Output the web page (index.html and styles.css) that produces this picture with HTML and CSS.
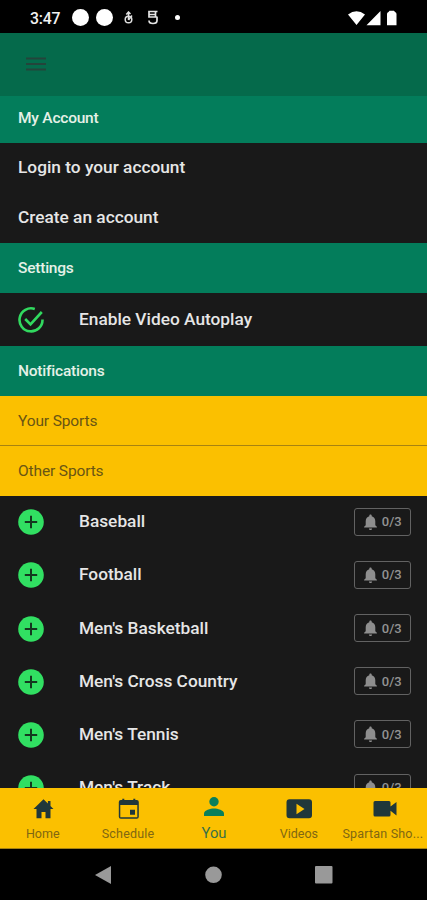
FILE: index.html
```
<!DOCTYPE html>
<html lang="en">
<head>
<meta charset="utf-8">
<title>Settings</title>
<link rel="stylesheet" href="styles.css">
</head>
<body>
<svg class="defs" width="0" height="0">
  <symbol id="plus" viewBox="0 0 26 26"><circle cx="13" cy="13" r="12.8" fill="#31df62"/><path d="M13 6.8v12.4M6.8 13h12.4" stroke="#14371f" stroke-width="2" fill="none"/></symbol>
  <symbol id="bell" viewBox="4 2 16 20"><path fill="#8e8e8e" d="M12 22c1.100 0 2-.9 2-2h-4c0 1.100.9 2 2 2zm6-6v-5c0-3.070-1.640-5.640-4.500-6.320V4c0-.83-.67-1.500-1.500-1.500s-1.500.67-1.500 1.500v.68C7.630 5.360 6 7.920 6 11v5l-2 2v1h16v-1l-2-2z"/></symbol>
</svg>
<div class="phone">
  <div class="status">
    <span class="time">3:47</span>
    <i class="dot"></i><i class="dot second"></i>
    <svg class="glyph-a" width="10" height="14" viewBox="0 0 10 14" fill="none" stroke="#ddd" stroke-width="1.500"><circle cx="4.500" cy="8.500" r="3.300"/><path d="M4.500 9V1M2.300 3.500L4.500 1l2 2M4.500 9l3.500-4.500"/></svg>
    <svg class="glyph-b" width="12" height="15" viewBox="0 0 12 15" fill="none" stroke="#e4e4e4" stroke-width="1.700"><path d="M10.500 1.500H2V7h8.500M2 4.500h7M8.500 1v6M10 7v3.500Q10 13.500 6 13.500T2 10.500"/></svg>
    <i class="tiny"></i>
    <svg class="signals" width="50" height="16" viewBox="0 0 50 16" fill="#fff"><path d="M0 4.500Q8.500-2 17 4.500L8.500 15zM18.500 15.200L32.500 1v14.200zM39 4q0-1.500 1.500-2l1-1.200h4.500l1 1.200q1.500.5 1.500 2v11.200H39z"/></svg>
  </div>
  <header class="appbar">
    <svg width="20" height="14" viewBox="0 0 20 14"><path d="M0 1.500h20M0 7h20M0 12.500h20" stroke="#24443b" stroke-width="2.200"/></svg>
  </header>
  <main class="content">
    <h2 class="section first"><span>My Account</span></h2>
    <div class="link"><span>Login to your account</span></div>
    <div class="link"><span>Create an account</span></div>
    <h2 class="section"><span>Settings</span></h2>
    <div class="row setting">
      <svg class="mark" viewBox="0 0 26 26" fill="none" stroke="#31d95f" stroke-width="2.600"><path d="M16.800 2A11.500 11.500 0 1 0 24.500 12.500M7.200 12l5.300 5.300L23.800 5"/></svg>
      <span class="name">Enable Video Autoplay</span>
    </div>
    <h2 class="section"><span>Notifications</span></h2>
    <h3 class="group lined">Your Sports</h3>
    <h3 class="group">Other Sports</h3>
    <div class="row"><svg class="mark"><use href="#plus"/></svg><span class="name">Baseball</span><span class="count"><svg><use href="#bell"/></svg>0/3</span></div>
    <div class="row"><svg class="mark"><use href="#plus"/></svg><span class="name">Football</span><span class="count"><svg><use href="#bell"/></svg>0/3</span></div>
    <div class="row"><svg class="mark"><use href="#plus"/></svg><span class="name">Men's Basketball</span><span class="count"><svg><use href="#bell"/></svg>0/3</span></div>
    <div class="row"><svg class="mark"><use href="#plus"/></svg><span class="name">Men's Cross Country</span><span class="count"><svg><use href="#bell"/></svg>0/3</span></div>
    <div class="row"><svg class="mark"><use href="#plus"/></svg><span class="name">Men's Tennis</span><span class="count"><svg><use href="#bell"/></svg>0/3</span></div>
    <div class="row"><svg class="mark"><use href="#plus"/></svg><span class="name">Men's Track</span><span class="count"><svg><use href="#bell"/></svg>0/3</span></div>
  </main>
  <nav class="tabs">
    <a class="tab"><svg width="26" height="24" viewBox="0 0 26 24"><path fill="#20373a" d="M13.500 2.300L3.500 12h3V21.300h5v-6.300h4v6.300h5V12h3l-3-2.900V4h-2.600v2.600z"/></svg><span>Home</span></a>
    <a class="tab"><svg width="26" height="24" viewBox="0 0 26 24"><path fill="#20373a" fill-rule="evenodd" d="M5.800 3h1.500V1.700h2V3h9V1.700h2V3h1.500q2 0 2 2v14.700q0 2-2 2h-16q-2 0-2-2V5q0-2 2-2zM5.300 8v12.200h17V8zM15 12.800h5v5h-5z"/></svg><span class="wide">Schedule</span></a>
    <a class="tab active"><svg width="26" height="24" viewBox="0 0 26 24"><g fill="#087f5b"><circle cx="14" cy="4.800" r="4.700"/><path d="M4 19v-2.500c0-3.300 6.500-5 10-5s10 1.700 10 5V19z"/></g></svg><span>You</span></a>
    <a class="tab"><svg width="26" height="24" viewBox="0 0 26 24"><path fill="#20373a" fill-rule="evenodd" d="M3.500 2.300h19.500q3 0 3 3v13q0 3-3 3H3.500q-3 0-3-3v-13q0-3 3-3zm7 4.400v10.500l8-5.200z"/></svg><span>Videos</span></a>
    <a class="tab"><svg width="26" height="24" viewBox="0 0 26 24"><path fill="#20373a" d="M4 4h14q1.500 0 1.500 1.500v4L25.500 5v13.500l-6-4.700v4.200q0 1.500-1.500 1.500H4q-1.500 0-1.500-1.500v-12.500q0-1.500 1.500-1.500z"/></svg><span class="wide last">Spartan Sho...</span></a>
  </nav>
  <div class="system">
    <svg width="16" height="18" viewBox="0 0 16 18"><path d="M16 0v18L0 9z" fill="#999"/></svg>
    <svg width="18" height="18"><circle cx="9.500" cy="8.800" r="8.300" fill="#999"/></svg>
    <svg width="18" height="18"><rect width="17.500" height="17.500" rx="1" fill="#999"/></svg>
  </div>
</div>
</body>
</html>
```
FILE: styles.css
```
* { box-sizing: border-box; }
body { margin: 0; background: #000; font-family: Roboto, sans-serif; }
svg { display: block; flex: none; }
.defs { position: absolute; }
.phone { width: 427px; height: 900px; display: flex; flex-direction: column; overflow: hidden; }
.status { height: 32.500px; flex: none; display: flex; align-items: center; padding: 3px 29px 0 30px; color: #f2f2f2; }
.time { width: 41.500px; font-size: 15.800px; font-weight: 500; letter-spacing: -.2px; padding-top: 1px; }
.dot { width: 17px; height: 17px; border-radius: 50%; background: #fff; }
.second { margin-left: 7px; }
.glyph-a { margin-left: 11px; }
.glyph-b { margin-left: 13px; }
.tiny { width: 5px; height: 5px; border-radius: 50%; background: #fff; margin-left: 16px; }
.signals { margin-left: auto; }
.appbar { height: 63.500px; flex: none; background: #056a4b; padding: 24.500px 25.500px; }
.content { flex: 1; min-height: 0; overflow: hidden; background: #191919; }
.section, .group { margin: 0; height: 50px; display: flex; align-items: center; padding: 0 18px; }
.section { background: #037d5b; color: #e5f1e7; font-size: 15.500px; font-weight: 500; letter-spacing: -.22px; }
.section.first { height: 47px; padding-bottom: 3px; }
.link { height: 50px; display: flex; align-items: center; padding: 0 18px 2px; color: #e6e6e6; font-size: 17.300px; font-weight: 500; }
.row { height: 53.200px; display: flex; align-items: center; padding: 0 16px 1.200px 18px; }
.row.setting { padding-bottom: 0; }
.mark { width: 26px; height: 26px; margin-right: 35px; }
.name { color: #e6e6e6; font-size: 17.300px; font-weight: 500; padding-bottom: 2px; }
.count { width: 57.500px; height: 28px; margin: 0 0 1px auto; border: 1.500px solid #626262; border-radius: 3px; display: flex; align-items: center; justify-content: center; gap: 5px; padding-left: 1px; color: #929292; font-size: 13px; font-weight: 500; }
.count svg { width: 13px; height: 16px; }
.group { background: #fbc000; color: #695514; font-size: 15.500px; font-weight: 400; letter-spacing: -.13px; }
.lined { border-bottom: 1px solid #a78311; }
.tabs { height: 61px; flex: none; background: #fbc000; display: grid; grid-template-columns: repeat(5, 1fr); border-bottom: 1px solid #a78311; }
.tab { display: flex; flex-direction: column; align-items: center; padding-top: 9px; color: #806712; font-size: 12.500px; white-space: nowrap; }
.tab span { margin-top: 5px; }
.tab .wide { letter-spacing: .2px; }
.tab .last { margin-right: 3px; }
.tab.active { color: #397047; font-size: 14.800px; }
.tab.active span { margin: 3px 0 0 1px; }
.system { height: 51px; flex: none; display: flex; align-items: center; justify-content: space-between; padding: 0 94px 0 95px; }
```
